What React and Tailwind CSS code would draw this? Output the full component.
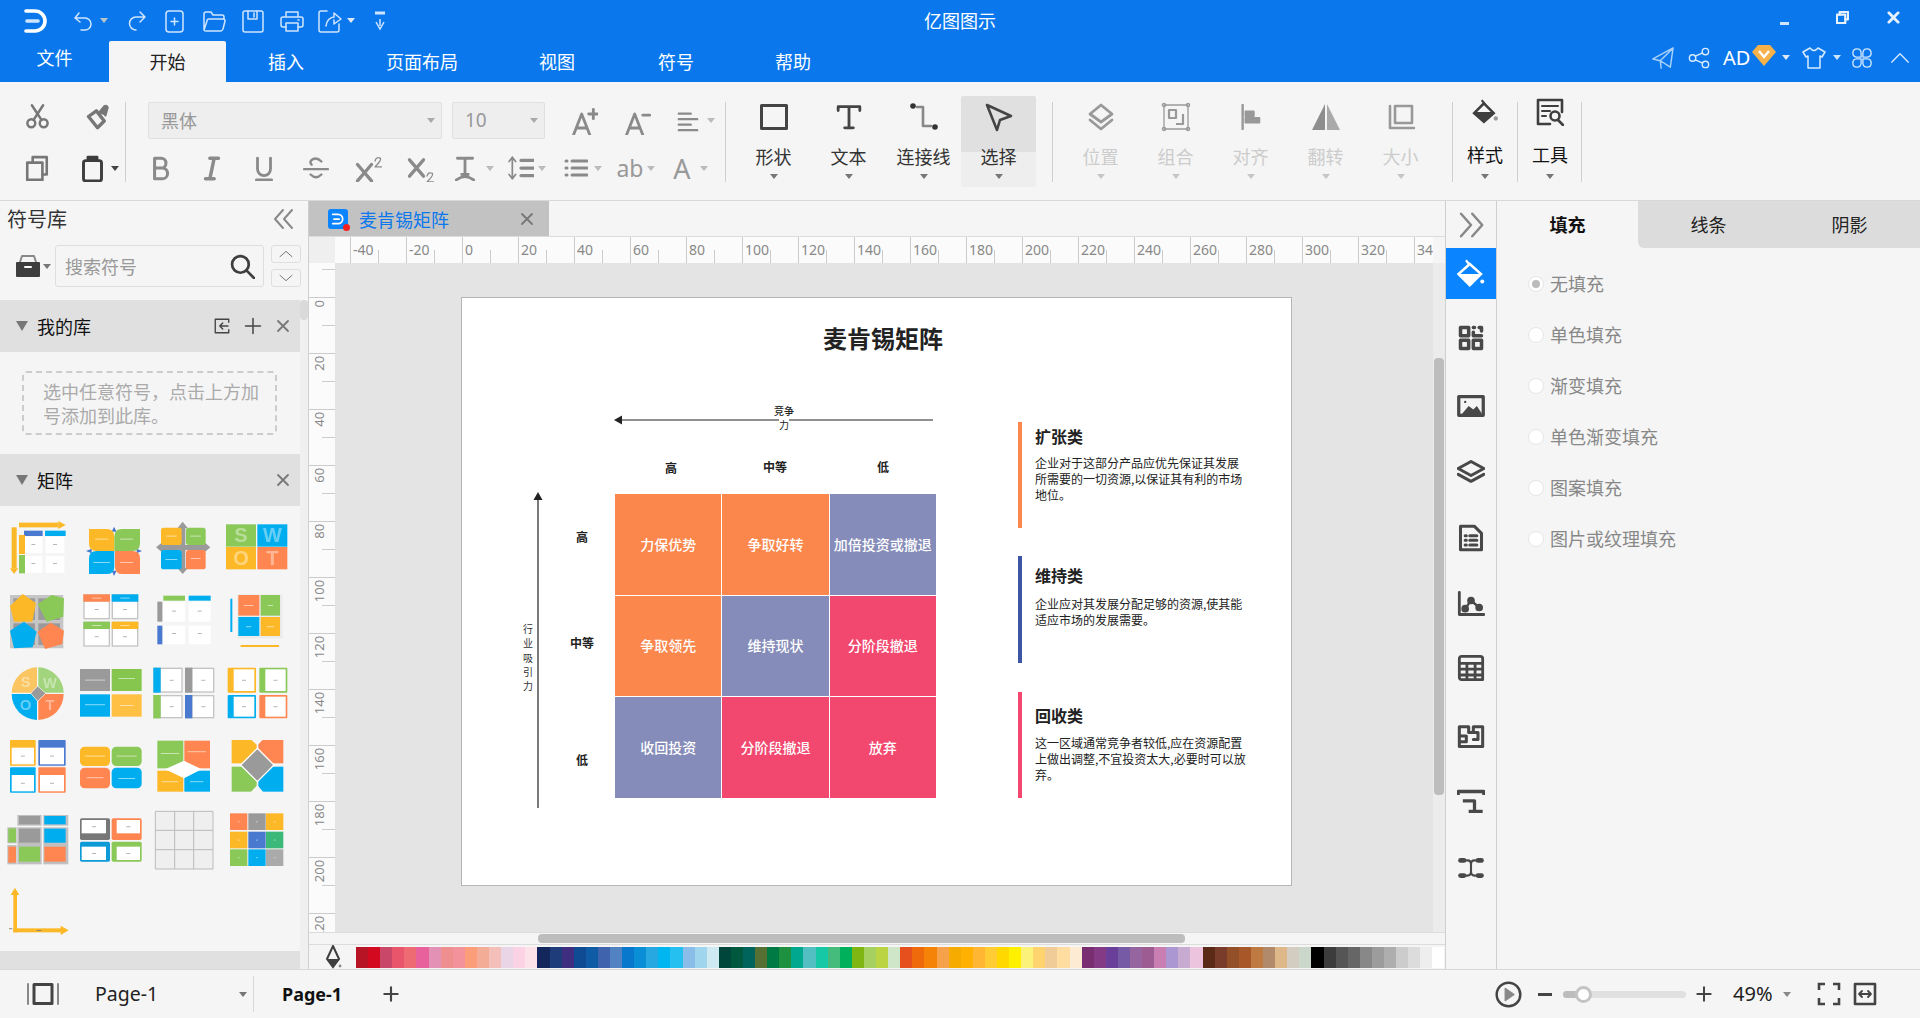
import React from "react";

const Y = "#fdb827", C = "#00aeef", G = "#8ac858", O = "#ff8650", K = "#9a9a9a", B = "#4a7ad0", W = "#ffffff";

const R = (x, y, x2, y2, f, rx = 0) => <rect x={x} y={y} width={x2 - x} height={y2 - y} fill={f} rx={rx} />;
const L = (cx, cy, w = 12, f = "#a8a8a8") => <rect x={cx - w / 2} y={cy - 1} width={w} height={2.5} fill={f} fillOpacity={f === "#fff" ? 0.65 : 1} />;

function Card({ x, y, x2, y2, c, inset = [5, 5, 5, 5] }) {
  return (
    <>
      {R(x, y, x2, y2, c, 3)}
      {R(x + inset[0], y + inset[1], x2 - inset[2], y2 - inset[3], W)}
      {L((x + inset[0] + x2 - inset[2]) / 2, (y + inset[1] + y2 - inset[3]) / 2)}
    </>
  );
}

function T({ c, r, children }) {
  const y0 = r < 3 ? 36 + 219 * r : 3 + 219 * (r - 3);
  return (
    <svg viewBox={`${3 + 219 * c} ${y0} 219 219`} width="73" height="73" className="blur-[0.7px]">
      {children}
    </svg>
  );
}

const SL = ({ x, y, t, s = 44 }) => (
  <text x={x} y={y} fontSize={s} fontFamily="Liberation Sans" fontWeight="700" fill="#fff" fillOpacity="0.4" textAnchor="middle">{t}</text>
);

const Thumbs = [
  <T c={0} r={0} key="1">
    {R(57, 68, 175, 82, Y)}<polygon points="175,63 197,75 175,87" fill={Y} />
    {R(35, 82, 50, 205, Y)}<polygon points="30,205 55,205 42,222" fill={Y} />
    {R(72, 92, 128, 108, B)}{R(135, 92, 197, 108, C)}
    {R(57, 105, 75, 162, Y)}{R(57, 165, 75, 220, G)}
    {R(75, 110, 127, 160, W)}{R(137, 110, 193, 160, W)}{R(75, 168, 127, 218, W)}{R(137, 168, 193, 218, W)}
    {L(100, 133)}{L(165, 133)}{L(100, 190)}{L(165, 190)}
  </T>,
  <T c={1} r={0} key="2">
    <polygon points="342,80 335,95 350,95" fill={B} /><polygon points="258,153 275,146 275,160" fill={B} />
    <polygon points="426,153 410,146 410,160" fill={B} /><polygon points="342,228 335,212 350,212" fill={B} />
    <path d="M267 87H320Q343 87 343 110V153H290Q267 153 267 130Z" fill={Y} />
    <path d="M343 110Q343 87 366 87H420V130Q420 153 397 153H343Z" fill={G} />
    <path d="M267 175Q267 153 290 153H343V200Q343 222 320 222H267Z" fill={C} />
    <path d="M345 153H397Q420 153 420 175V222H368Q345 222 345 200Z" fill={O} />
    {L(305, 117, 40, "#fff")}{L(380, 117, 40, "#fff")}{L(305, 187, 50, "#fff")}{L(380, 187, 40, "#fff")}
  </T>,
  <T c={2} r={0} key="3">
    {R(541, 80, 556, 210, K)}{R(485, 135, 615, 150, K)}
    <polygon points="548,65 532,85 564,85" fill={K} /><polygon points="548,222 532,204 564,204" fill={K} />
    <polygon points="468,142 488,126 488,158" fill={K} /><polygon points="631,142 612,126 612,158" fill={K} />
    {R(483, 83, 545, 135, Y, 8)}{R(558, 83, 617, 135, G, 8)}{R(483, 150, 545, 208, C, 8)}{R(558, 150, 617, 208, O, 8)}
    {L(514, 108, 32, "#fff")}{L(587, 108, 32, "#fff")}{L(514, 178, 36, "#fff")}{L(587, 175, 30, "#fff")}
  </T>,
  <T c={3} r={0} key="4">
    {R(678, 73, 768, 140, G)}{R(772, 73, 862, 140, C)}{R(678, 141, 768, 208, Y)}{R(772, 141, 862, 208, O)}
    <SL x={723} y={127} t="S" s={60} /><SL x={817} y={127} t="W" s={60} /><SL x={723} y={195} t="O" s={60} /><SL x={817} y={195} t="T" s={60} />
  </T>,
  <T c={0} r={1} key="5">
    {R(30, 285, 190, 445, "#c5c5c5", 2)}{R(40, 295, 105, 360, K)}{R(115, 295, 180, 360, K)}{R(40, 370, 105, 435, K)}{R(115, 370, 180, 435, K)}
    <polygon points="68,282 108,310 97,365 42,365 30,318" fill={Y} />
    <polygon points="113,312 155,285 192,295 190,350 140,365" fill={G} />
    <polygon points="30,392 72,365 110,395 98,442 42,445" fill={C} />
    <polygon points="113,395 152,368 192,392 187,432 135,447" fill={O} />
  </T>,
  <T c={1} r={1} key="6">
    {[[250, 283, O], [335, 283, C], [250, 365, G], [335, 365, Y]].map(([x, y, c]) => (
      <g key={x + "" + y}>
        {R(x, y, x + 80, y + 75, "#c4c4c4")}{R(x + 4, y + 22, x + 76, y + 71, W)}{R(x, y, x + 80, y + 22, c)}
        {L(x + 40, y + 11, 28, "#fff")}{L(x + 40, y + 45)}
      </g>
    ))}
  </T>,
  <T c={2} r={1} key="7">
    {R(490, 287, 555, 302, G)}{R(566, 287, 632, 302, C)}{R(472, 305, 487, 365, K)}{R(472, 377, 487, 433, B)}
    {R(490, 305, 555, 365, W)}{R(566, 305, 632, 365, W)}{R(490, 377, 555, 433, W)}{R(566, 377, 632, 433, W)}
    {L(522, 333)}{L(599, 333)}{L(522, 400)}{L(599, 400)}
  </T>,
  <T c={3} r={1} key="8">
    {R(712, 283, 847, 415, "#ebebeb")}{R(715, 285, 778, 347, O)}{R(782, 285, 840, 347, G)}{R(715, 351, 778, 408, C)}{R(782, 351, 840, 408, Y)}
    {R(691, 296, 697, 396, C)}{R(722, 435, 837, 441, Y)}
    {L(746, 316, 30, "#fff")}{L(811, 316, 16, "#fff")}{L(746, 380, 16, "#fff")}{L(811, 380, 22, "#fff")}
  </T>,
  <T c={0} r={2} key="9">
    <path d="M111 578V502A78 78 0 0 0 35 578Z" fill="#fbc662" /><path d="M115 578V502A78 78 0 0 1 191 578Z" fill="#a1d47c" />
    <path d="M111 582H35A78 78 0 0 0 111 660Z" fill={C} /><path d="M115 582H191A78 78 0 0 1 115 660Z" fill={O} />
    <polygon points="113,558 137,580 113,604 92,580" fill={K} stroke="#fff" strokeWidth="2" />
    <SL x={77} y={560} t="S" /><SL x={150} y={565} t="W" /><SL x={77} y={630} t="O" /><SL x={150} y={630} t="T" />
  </T>,
  <T c={1} r={2} key="10">
    {R(240, 507, 330, 573, K)}{R(335, 507, 425, 573, "#86c64f")}{R(240, 583, 330, 650, C)}{R(335, 583, 425, 650, "#ffc043")}
    {L(285, 540, 60, "#fff")}{L(380, 535, 50, "#fff")}{L(285, 614, 60, "#fff")}{L(380, 616, 40, "#fff")}
  </T>,
  <T c={2} r={2} key="11">
    {[[460, 503, 548, 578, C], [555, 503, 643, 578, K], [460, 585, 548, 655, G], [555, 585, 643, 655, B]].map(([x, y, x2, y2, c]) => (
      <g key={x + "" + y}>
        {R(x, y, x2, y2, "#c4c4c4")}{R(x + 22, y + 4, x2 - 4, y2 - 4, W)}{R(x, y, x + 22, y2, c)}{L(x + 55, (y + y2) / 2)}
      </g>
    ))}
  </T>,
  <T c={3} r={2} key="12">
    <Card x={683} y={503} x2={768} y2={578} c={Y} inset={[18, 5, 5, 5]} />
    <Card x={778} y={503} x2={862} y2={578} c={G} inset={[18, 5, 5, 5]} />
    <Card x={683} y={585} x2={768} y2={655} c={C} inset={[18, 5, 5, 5]} />
    <Card x={778} y={585} x2={862} y2={655} c={O} inset={[18, 5, 5, 5]} />
  </T>,
  <T c={0} r={3} key="13">
    <Card x={30} y={30} x2={107} y2={107} c={Y} inset={[5, 23, 5, 4]} />
    <Card x={115} y={30} x2={197} y2={107} c={B} inset={[5, 23, 5, 4]} />
    <Card x={30} y={112} x2={107} y2={188} c={C} inset={[5, 23, 5, 4]} />
    <Card x={115} y={112} x2={197} y2={188} c={O} inset={[5, 23, 5, 4]} />
  </T>,
  <T c={1} r={3} key="14">
    {R(240, 50, 330, 108, Y, 14)}{R(335, 50, 425, 108, G, 14)}{R(240, 113, 330, 175, O, 14)}{R(335, 113, 425, 175, C, 14)}
    {L(285, 78, 60, "#fff")}{L(380, 78, 60, "#fff")}{L(285, 143, 50, "#fff")}{L(380, 145, 50, "#fff")}
  </T>,
  <T c={2} r={3} key="15">
    {R(472, 32, 550, 115, G)}{R(553, 32, 630, 115, O)}{R(472, 122, 550, 185, Y)}{R(553, 122, 630, 185, C)}
    <polygon points="495,118 552,92 605,118 552,145" fill={W} />
    {L(510, 70, 55, "#fff")}{L(590, 65, 55, "#fff")}{L(510, 155, 50, "#fff")}{L(590, 155, 40, "#fff")}
  </T>,
  <T c={3} r={3} key="16">
    {R(695, 30, 770, 100, Y)}{R(775, 30, 850, 100, O)}{R(695, 110, 770, 185, G)}{R(775, 110, 850, 185, C)}
    <polygon points="772,55 822,105 772,155 722,105" fill={K} stroke="#fff" strokeWidth="4" />
    <polygon points="752,28 790,28 772,46" fill="#f5f5f5" /><polygon points="752,187 790,187 772,165" fill="#f5f5f5" />
  </T>,
  <T c={0} r={4} key="17">
    {R(52, 255, 125, 287, "#c0c0c0")}{R(57, 258, 120, 283, K)}{R(130, 255, 205, 287, "#c0c0c0")}{R(133, 258, 197, 283, C)}
    {R(22, 292, 50, 340, "#c0c0c0")}{R(25, 295, 48, 337, G)}{R(22, 345, 50, 403, "#c0c0c0")}{R(25, 350, 48, 398, O)}
    {R(52, 292, 125, 345, "#c0c0c0")}{R(57, 296, 120, 338, K)}{R(130, 292, 205, 345, "#c0c0c0")}{R(133, 296, 197, 338, C)}
    {R(52, 345, 125, 403, "#c0c0c0")}{R(57, 350, 120, 395, G)}{R(130, 345, 205, 403, "#c0c0c0")}{R(133, 350, 197, 395, O)}
  </T>,
  <T c={1} r={4} key="18">
    {R(240, 265, 330, 330, "#777", 5)}{R(245, 270, 318, 310, W)}{L(282, 290)}
    {R(335, 265, 425, 330, O, 5)}{R(350, 270, 420, 310, W)}{L(385, 290)}
    {R(240, 335, 330, 395, "#0d9bd7", 5)}{R(245, 350, 318, 390, W)}{L(282, 370)}
    {R(335, 335, 425, 395, G, 5)}{R(350, 350, 420, 390, W)}{L(385, 370)}
  </T>,
  <T c={2} r={4} key="19">
    {R(466, 244, 639, 417, "#efefef")}
    <path d="M466 244H639V417H466ZM524 244V417M581 244V417M466 301H639M466 359H639" fill="none" stroke="#bbb" strokeWidth="3" />
  </T>,
  <T c={3} r={4} key="20">
    {[[690, 250, O], [745, 250, K], [798, 250, Y], [690, 305, Y], [745, 305, B], [798, 305, "#3cb878"], [690, 358, G], [745, 358, C], [798, 358, "#aaaaaa"]].map(([x, y, c]) => (
      <g key={x + "" + y}>{R(x, y, x + 52, y + 50, c)}{L(x + 26, y + 25, 5, "#fff")}</g>
    ))}
  </T>,
  <T c={0} r={5} key="21">
    {R(40, 490, 51, 607, Y)}{R(40, 595, 185, 607, Y)}
    <polygon points="45,473 32,495 58,495" fill={Y} /><polygon points="206,601 182,587 182,615" fill={Y} />
    {L(32, 596, 10, "#777")}{L(117, 601, 14, "#777")}
  </T>,
];

const Caret = ({ cls = "border-t-[#777]", className = "" }) => (
  <div className={`w-0 h-0 border-x-[4px] border-x-transparent border-t-[5px] ${cls} ${className}`} />
);

const Sv = ({ s = 24, h, c = "#444", w = 2, vb = "0 0 24 24", className = "", children }) => (
  <svg width={s} height={h || s} viewBox={vb} fill="none" stroke={c} strokeWidth={w} strokeLinecap="round" strokeLinejoin="round" className={`shrink-0 ${className}`}>
    {children}
  </svg>
);

const Q = "#cfe5ff";

function QuickBar() {
  return (
    <div className="flex items-center flex-1">
      <svg width="24" height="26" viewBox="0 0 24 26" className="ml-[24px] shrink-0">
        <path d="M2 3H11A10 10 0 0 1 11 23H2" fill="none" stroke="#fff" strokeWidth="3.6" strokeLinecap="round" />
        <path d="M3 13H14" stroke="#cfe5ff" strokeWidth="3.6" strokeLinecap="round" />
      </svg>
      <Sv c={Q} w={1.5} className="ml-[23px]"><path d="M8 4L4 9L9 13M4 9H14A6 6 0 0 1 14 21H10" /></Sv>
      <Caret cls="border-t-[#b9c4cc]" className="ml-[5px]" />
      <Sv c={Q} w={1.5} className="ml-[17px]"><path d="M15 3L20 8L15 13M20 8H11A6.5 6.5 0 0 0 11 21" /></Sv>
      <Sv c={Q} w={1.5} className="ml-[13px]"><rect x="4" y="2" width="17" height="21" rx="3" /><path d="M12.5 9V16M9 12.5H16" /></Sv>
      <Sv c={Q} w={1.5} className="ml-[16px]"><path d="M2 21V5Q2 3 4 3H9L11 6H20Q22 6 22 8V10M2 21Q2 22 4 22H19Q20 22 21 20L23 12Q23 10 21 10H7Q5 10 5 12L2 21" /></Sv>
      <Sv c={Q} w={1.5} className="ml-[15px]"><rect x="2" y="2" width="20" height="21" rx="2" /><path d="M7 2V10H16V2M13 4V8" /></Sv>
      <Sv c={Q} w={1.5} className="ml-[15px]"><path d="M6 8V3H18V8M6 18H3Q1 18 1 16V10Q1 8 3 8H21Q23 8 23 10V16Q23 18 21 18H18" /><rect x="6" y="14" width="12" height="8" /><path d="M18 11H19" /></Sv>
      <Sv c={Q} w={1.5} className="ml-[14px]"><path d="M9 2H3Q1 2 1 4V21Q1 23 3 23H19Q21 23 21 21V15M8 17Q9 9 16 8V4L23 10L16 15V11" /></Sv>
      <Caret cls="border-t-[#dfe9f5]" className="ml-[5px]" />
      <svg width="14" height="22" viewBox="0 0 14 22" className="ml-[18px] shrink-0" fill="none" stroke={Q} strokeWidth="1.5">
        <path d="M2 3H12" strokeWidth="3" /><path d="M3 12L7 19L11 12" /><path d="M7 9V16" />
      </svg>
    </div>
  );
}

function WindowBtns() {
  return (
    <div className="flex-1 flex items-center justify-end">
      <div className="w-[9px] h-[2.5px] bg-[#cfe5ff] mt-[6px]" />
      <Sv s={13} c="#e7f2ff" w={2.4} vb="0 0 14 14" className="ml-[47px] -mt-[6px]"><path d="M4 4V1H13V9H10" /><rect x="1" y="4" width="9" height="9" /></Sv>
      <Sv s={13} c="#e7f2ff" w={3} vb="0 0 14 14" className="ml-[38px] mr-[20px] -mt-[6px]"><path d="M2 2L12 12M12 2L2 12" /></Sv>
    </div>
  );
}

const tabs = [["文件", 109], ["开始", 117, true], ["插入", 120], ["页面布局", 152], ["视图", 118], ["符号", 120], ["帮助", 114]];

function TabRow() {
  return (
    <div className="flex h-[41px] items-stretch">
      {tabs.map(([t, w, active], i) => (
        <div
          key={t}
          className={`flex items-center justify-center text-[18px] ${active ? "bg-[#f5f5f5] text-[#222] rounded-t-[2px]" : "text-white"} ${i === 0 ? "pb-[9px]" : ""}`}
          style={{ width: w }}
        >
          {t}
        </div>
      ))}
      <div className="ml-auto flex items-center pb-[8px] pr-[10px]">
        <Sv s={22} c="#a9d0fb" w={1.6} vb="0 0 24 24"><path d="M23 1L1 13L9 15L10 23M23 1L20 22L9 15M23 1L9 15" /></Sv>
        <Sv s={22} c="#d9ebff" w={1.5} className="ml-[14px]"><circle cx="5" cy="12" r="3.5" /><circle cx="19" cy="5" r="3.5" /><circle cx="19" cy="19" r="3.5" /><path d="M8 10L16 6.5M8 14L16 17.5" /></Sv>
        <span className="ml-[13px] w-[26px] text-[20px] leading-[24px] text-white font-['Noto_Sans',sans-serif]">AD</span>
        <svg width="24" height="22" viewBox="0 0 24 22" className="ml-[3px] -mt-[4px] shrink-0">
          <polygon points="6,0 18,0 24,7 12,21 0,7" fill="#f6b14a" />
          <path d="M7 6L12 12L17 6" fill="none" stroke="#fff" strokeWidth="2.4" />
        </svg>
        <Caret cls="border-t-[#dfe9f5]" className="ml-[6px]" />
        <Sv s={24} c="#d9ebff" w={1.5} className="ml-[12px]"><path d="M8 2L1 6L4 11L6 10V22H18V10L20 11L23 6L16 2Q12 7 8 2Z" /></Sv>
        <Caret cls="border-t-[#cfe5ff]" className="ml-[7px]" />
        <Sv s={22} c="#cfe5ff" w={1.5} className="ml-[10px]"><path d="M11 11H6A4.5 4.5 0 1 1 11 6ZM13 11H18A4.5 4.5 0 1 0 13 6ZM11 13H6A4.5 4.5 0 1 0 11 18ZM13 13H18A4.5 4.5 0 1 1 13 18Z" /></Sv>
        <Sv s={20} c="#d9ebff" w={1.6} className="ml-[17px]"><path d="M2 17L12 7L22 17" /></Sv>
      </div>
    </div>
  );
}

const Dv = ({ className = "" }) => <div className={`w-px h-[80px] mt-[20px] bg-[#cfcfcf] shrink-0 ${className}`} />;

const SmallIcon = ({ w = 52, children, className = "" }) => (
  <div className={`flex items-center justify-center h-full shrink-0 ${className}`} style={{ width: w }}>{children}</div>
);

const g1 = "#8a8a8a";

function Clipboard() {
  return (
    <div className="w-[125px] h-full pt-[8px] shrink-0">
      <div className="flex h-[52px] items-center">
        <SmallIcon w={28} className="ml-[23px]">
          <Sv s={27} c="#777" w={2.2}><circle cx="6.5" cy="18" r="3.5" /><circle cx="17.5" cy="18" r="3.5" /><path d="M8.5 15L17 2M15.5 15L7 2" /></Sv>
        </SmallIcon>
        <SmallIcon w={28} className="ml-[32px]">
          <Sv s={27} c="#777" w={2}><path d="M11 7L4 12L12 22L18 16Z" fill="none" strokeWidth="3" /><path d="M13 9L18 3Q20 2 21 4L19 11" fill="#777" /></Sv>
        </SmallIcon>
      </div>
      <div className="flex h-[52px] items-center">
        <SmallIcon w={28} className="ml-[23px]">
          <Sv s={26} c="#777" w={2.4}><rect x="3" y="7" width="14" height="16" /><path d="M8 7V2H21V18H17" /></Sv>
        </SmallIcon>
        <SmallIcon w={28} className="ml-[27px]">
          <Sv s={27} c="#3d3d3d" w={2.6}><rect x="4" y="5" width="16" height="18" rx="2" /><path d="M8 5V2H16V5Z" fill="#3d3d3d" /></Sv>
        </SmallIcon>
        <Caret cls="border-t-[#444]" className="ml-[5px]" />
      </div>
    </div>
  );
}

function FontGroup() {
  return (
    <div className="w-[599px] h-full pt-[8px] shrink-0">
      <div className="flex h-[52px] items-center pt-[9px]">
        <div className="ml-[22px] w-[294px] h-[37px] bg-[#eeeeee] border border-[#e0e0e0] rounded-[2px] flex items-center px-[12px] text-[18px] text-[#999] justify-between">
          黑体<Caret cls="border-t-[#aaa]" className="mr-[-6px]" />
        </div>
        <div className="ml-[10px] w-[93px] h-[37px] bg-[#eeeeee] border border-[#e0e0e0] rounded-[2px] flex items-center px-[12px] text-[19px] text-[#999] justify-between font-['Noto_Sans',sans-serif]">
          10<Caret cls="border-t-[#aaa]" className="mr-[-6px]" />
        </div>
        <SmallIcon w={32} className="ml-[23px]">
          <Sv s={28} c={g1} w={2.4}><path d="M3 24L10 6L17 24M5.5 18H14.5" /><path d="M20 2V10M16 6H24" /></Sv>
        </SmallIcon>
        <SmallIcon w={32} className="ml-[21px]">
          <Sv s={28} c={g1} w={2.4}><path d="M3 24L10 6L17 24M5.5 18H14.5" /><path d="M17 7H23" /></Sv>
        </SmallIcon>
        <SmallIcon w={24} className="ml-[23px]">
          <Sv s={22} c={g1} w={2.6}><path d="M2 4H15M2 10H22M2 16H15M2 22H22" /></Sv>
        </SmallIcon>
        <Caret cls="border-t-[#bbb]" className="ml-[7px]" />
      </div>
      <div className="flex h-[52px] items-center">
        <SmallIcon className="ml-[8px]"><Sv s={26} c={g1} w={2.8}><path d="M7 3V22H14A5 5 0 0 0 14 12H7M7 3H13A4.5 4.5 0 0 1 13 12" /></Sv></SmallIcon>
        <SmallIcon><Sv s={26} c={g1} w={3.2}><path d="M10 3H18M6 22H14M14 3L10 22" /></Sv></SmallIcon>
        <SmallIcon><Sv s={26} c={g1} w={2.6}><path d="M6 3V13A6 6 0 0 0 18 13V3M5 23H19" /></Sv></SmallIcon>
        <SmallIcon><Sv s={26} c={g1} w={2.2}><path d="M17 6Q12 1 7.5 5Q6 7 8 9M1 13H23M7 18Q12 23 17 18" /></Sv></SmallIcon>
        <SmallIcon>
          <Sv s={28} c={g1} w={2.8}><path d="M3 9L15 23M15 9L3 23" /><path d="M18 6Q19 2 22.5 3.5Q24 5 18 11H24" strokeWidth="1.1" /></Sv>
        </SmallIcon>
        <SmallIcon>
          <Sv s={28} c={g1} w={2.8}><path d="M3 5L15 19M15 5L3 19" /><path d="M18 19Q19 15 22.5 16.5Q24 18 18 24H24" strokeWidth="1.1" /></Sv>
        </SmallIcon>
        <SmallIcon w={28} className="ml-[5px]"><Sv s={26} c={g1} w={3}><path d="M5 3H19M12 3V18M9 18H15M4 23Q12 17 20 23" strokeWidth="2.6" /></Sv></SmallIcon>
        <Caret cls="border-t-[#bbb]" className="ml-[7px]" />
        <SmallIcon w={28} className="ml-[13px]"><Sv s={26} c={g1} w={2.6}><path d="M4 2V22M1 6L4 2L7 6M1 18L4 22L7 18" strokeWidth="1.6" /><path d="M12 5H24M12 12H24M12 19H24" strokeWidth="3" /></Sv></SmallIcon>
        <Caret cls="border-t-[#bbb]" className="ml-[3px]" />
        <SmallIcon w={28} className="ml-[16px]"><Sv s={24} c={g1} w={3}><path d="M8 5H23M8 12H23M8 19H23M2 5H3M2 12H3M2 19H3" /></Sv></SmallIcon>
        <Caret cls="border-t-[#bbb]" className="ml-[4px]" />
        <SmallIcon w={28} className="ml-[14px]"><span className="text-[23px] text-[#999] leading-none font-['Noto_Sans',sans-serif]">ab</span></SmallIcon>
        <Caret cls="border-t-[#bbb]" className="ml-[3px]" />
        <SmallIcon w={28} className="ml-[13px]"><span className="text-[27px] text-[#999] leading-none font-['Noto_Sans',sans-serif]">A</span></SmallIcon>
        <Caret cls="border-t-[#bbb]" className="ml-[4px]" />
      </div>
    </div>
  );
}

function BigBtn({ label, children, disabled, active, tight, w = 75, className = "" }) {
  return (
    <div
      className={`mt-[14px] h-[91px] flex flex-col items-center shrink-0 rounded-[2px] ${active ? "bg-[linear-gradient(#e0e0e0_56px,#eeeeee_56px)]" : ""} ${className}`}
      style={{ width: w }}
    >
      <div className={`flex items-center justify-center ${tight ? "h-[32px]" : "h-[42px]"}`}>{children}</div>
      <div className={`h-[24px] leading-[24px] text-[18px] ${disabled ? "text-[#cccccc] mt-[6px]" : tight ? "text-[#111] mt-[14px]" : "text-[#333] mt-[6px]"}`}>{label}</div>
      <Caret cls={disabled ? "border-t-[#c6c6c6]" : "border-t-[#777]"} className={tight ? "mt-[8px]" : "mt-[6px]"} />
    </div>
  );
}

const gd = "#999";

function Ribbon() {
  return (
    <div className="flex h-[119px] border-b border-[#d8d8d8] bg-[#f5f5f5] shrink-0">
      <Clipboard />
      <Dv />
      <FontGroup />
      <Dv />
      <div className="w-[10px] shrink-0" />
      <BigBtn label="形状"><Sv s={28} h={26} c="#444" w={3} vb="0 0 28 26"><rect x="1.5" y="1.5" width="25" height="23" /></Sv></BigBtn>
      <BigBtn label="文本"><Sv s={26} c="#444" w={2.6}><path d="M2 6V2.5H22V6M12 2.5V22M8 22H16" /></Sv></BigBtn>
      <BigBtn label="连接线"><Sv s={30} h={28} c="#888" w={2.6} vb="0 0 30 28"><path d="M8 4H14V23H22" /><circle cx="4" cy="3" r="2.8" fill="#333" stroke="none" /><circle cx="26" cy="24" r="2.8" fill="#333" stroke="none" /></Sv></BigBtn>
      <BigBtn label="选择" active><Sv s={30} c="#444" w={2.6} vb="0 0 30 30"><path d="M3 3L27 14L16 18L13 28Z" /></Sv></BigBtn>
      <Dv className="ml-[16px]" />
      <div className="w-[10px] shrink-0" />
      <BigBtn label="位置" disabled><Sv s={28} c={gd} w={2.8} vb="0 0 28 28"><path d="M14 2L25 11L14 19L3 11Z" /><path d="M3 17L14 26L25 17" /></Sv></BigBtn>
      <BigBtn label="组合" disabled><Sv s={30} c={gd} w={1.3} vb="0 0 30 30"><rect x="3" y="3" width="24" height="24" /><circle cx="3" cy="3" r="1.6" /><circle cx="27" cy="3" r="1.6" /><circle cx="3" cy="27" r="1.6" /><circle cx="27" cy="27" r="1.6" /><path d="M8 8H15V16H8ZM22 12V22H15" strokeWidth="2.2" strokeLinecap="butt" /></Sv></BigBtn>
      <BigBtn label="对齐" disabled><Sv s={26} c={gd} w={2} vb="0 0 26 28"><path d="M4 1V27" strokeWidth="2.6" /><rect x="7" y="8" width="9" height="5" fill={gd} /><rect x="7" y="15" width="15" height="5" fill={gd} /></Sv></BigBtn>
      <BigBtn label="翻转" disabled><svg width="30" height="26" viewBox="0 0 30 26" className="shrink-0"><polygon points="14,0 14,26 1,26" fill="#8e8e8e" /><polygon points="16,0 16,26 29,26" fill="#aaaaaa" /></svg></BigBtn>
      <BigBtn label="大小" disabled><Sv s={28} c={gd} w={3} vb="0 0 28 28"><rect x="8" y="3" width="17" height="17" strokeWidth="2.6" /><path d="M3 3V25H27" strokeWidth="2.6" /></Sv></BigBtn>
      <Dv className="ml-[14px]" />
      <BigBtn label="样式" tight w={64}>
        <svg width="30" height="26" viewBox="0 0 24 24" className="shrink-0"><path d="M9 1L12 5" stroke="#3e3e3e" strokeWidth="2" /><path d="M11 4L20 13L11 21L2 13Z" fill="none" stroke="#3e3e3e" strokeWidth="2.4" /><path d="M2 12H20L11 21Z" fill="#3e3e3e" /><circle cx="22" cy="18" r="2" fill="#999" /></svg>
      </BigBtn>
      <Dv />
      <BigBtn label="工具" tight w={62} className="ml-px">
        <Sv s={28} c="#3e3e3e" w={2.6} vb="0 0 28 28"><path d="M26 14V2H2V26H14" /><path d="M6 8H22M6 13H14M6 18H10" strokeWidth="2" /><circle cx="19" cy="18" r="4.5" /><path d="M22 22L27 27" /></Sv>
      </BigBtn>
      <Dv />
    </div>
  );
}

const Chevs = ({ dir = "left", c = "#888", s = 28 }) => (
  <Sv s={s} c={c} w={2} vb="0 0 24 24">
    {dir === "left" ? <path d="M11 3L3 12L11 21M20 3L12 12L20 21" /> : <path d="M4 3L12 12L4 21M13 3L21 12L13 21" />}
  </Sv>
);

const Tri = () => <div className="w-0 h-0 border-x-[6px] border-x-transparent border-t-[10px] border-t-[#777]" />;

const XIcon = () => <Sv s={14} c="#777" w={1.8} vb="0 0 14 14"><path d="M2 2L12 12M12 2L2 12" /></Sv>;

function LeftPanel() {
  return (
    <div className="w-[309px] border-r border-[#cfcfcf] flex flex-col shrink-0 bg-[#f5f5f5]">
      <div className="h-[36px] flex items-center justify-between pl-[7px] pr-[12px] shrink-0">
        <span className="text-[20px] text-[#333]">符号库</span>
        <Chevs s={24} />
      </div>
      <div className="flex h-[42px] mt-[8px] items-center shrink-0">
        <Sv s={24} c="#3e3e3e" w={2} className="ml-[16px]"><path d="M4 8L6 2H18L20 8" strokeWidth="2" stroke="#888" /><path d="M1 9H23V22H1Z" fill="#3e3e3e" /><path d="M9 13H15" stroke="#fff" /></Sv>
        <Caret cls="border-t-[#777]" className="ml-[3px]" />
        <div className="ml-[4px] w-[209px] h-[42px] border border-[#dedede] rounded-[3px] flex items-center justify-between pl-[9px] pr-[8px]">
          <span className="text-[18px] text-[#999]">搜索符号</span>
          <Sv s={25} c="#3e3e3e" w={2.6}><circle cx="10" cy="10" r="8" /><path d="M16 16L23 23" /></Sv>
        </div>
        <div className="ml-[7px] flex flex-col gap-[6px]">
          <div className="w-[30px] h-[18px] border border-[#dedede] rounded-[3px] flex items-center justify-center"><Sv s={16} c="#777" w={1.5}><path d="M3 16L12 8L21 16" /></Sv></div>
          <div className="w-[30px] h-[18px] border border-[#dedede] rounded-[3px] flex items-center justify-center"><Sv s={16} c="#777" w={1.5}><path d="M3 8L12 16L21 8" /></Sv></div>
        </div>
      </div>
      <div className="mt-[13px] flex flex-1 min-h-0">
        <div className="w-[300px] flex flex-col shrink-0">
          <div className="h-[52px] bg-[#e0e0e0] flex items-center shrink-0">
            <div className="ml-[16px]"><Tri /></div>
            <span className="ml-[9px] text-[18px] text-[#111]">我的库</span>
            <Sv s={18} c="#444" w={1.8} className="ml-[122px]"><path d="M21 7V3H3V21H21V17M20 12H9M13 8L9 12L13 16" /></Sv>
            <Sv s={18} c="#444" w={2} className="ml-[13px]"><path d="M12 2V22M2 12H22" /></Sv>
            <div className="ml-[14px]"><XIcon /></div>
          </div>
          <div className="h-[102px] pt-[19px] pl-[22px] shrink-0">
            <div className="w-[255px] h-[64px] border-2 border-dashed border-[#cccccc] rounded-[4px] pl-[19px] pt-[6px] text-[18px] leading-[24px] text-[#aaaaaa]">
              <div className="whitespace-nowrap">选中任意符号，点击上方加</div>
              <div className="whitespace-nowrap">号添加到此库。</div>
            </div>
          </div>
          <div className="h-[52px] bg-[#e0e0e0] flex items-center shrink-0">
            <div className="ml-[16px]"><Tri /></div>
            <span className="ml-[9px] text-[18px] text-[#111]">矩阵</span>
            <div className="ml-auto mr-[10px]"><XIcon /></div>
          </div>
          <div className="flex-1 min-h-0 pl-px pt-[6px] grid grid-cols-[repeat(4,73px)] auto-rows-[73px] content-start overflow-hidden">
            {Thumbs}
          </div>
          <div className="h-[18px] bg-[#e0e0e0] shrink-0" />
        </div>
        <div className="w-[8px] bg-[#f0f0f0]">
          <div className="h-[20px] bg-[#dadada] rounded-[4px]" />
        </div>
      </div>
    </div>
  );
}

const hTicks = Array.from({ length: 20 }, (_, i) => ({ x: 15 + 56 * i, v: -40 + 20 * i }));
const vTicks = Array.from({ length: 12 }, (_, i) => ({ y: 34 + 56 * i, v: 20 * i }));

function HRuler() {
  return (
    <svg width="1098" height="26" className="block shrink-0 bg-[#fbfbfb]">
      {hTicks.map((t) => t.x).map((x) => (
        <g key={x} stroke="#cccccc">
          <line x1={x + 0.5} y1="0" x2={x + 0.5} y2="26" />
          <line x1={x + 28.5} y1="13" x2={x + 28.5} y2="26" />
        </g>
      ))}
      {hTicks.map((t) => (
        <text key={t.x} x={t.x + 3} y="18" fontSize="14" fill="#888" fontFamily="Noto Sans">{t.v}</text>
      ))}
    </svg>
  );
}

function VRuler() {
  return (
    <svg width="26" height="669" className="block shrink-0 bg-[#fbfbfb]">
      {vTicks.map((t) => (
        <g key={t.y} stroke="#cccccc">
          <line x1="0" y1={t.y + 0.5} x2="26" y2={t.y + 0.5} />
          <line x1="13" y1={t.y + 28.5} x2="26" y2={t.y + 28.5} />
          <line x1="13" y1={t.y - 27.5} x2="26" y2={t.y - 27.5} />
        </g>
      ))}
      {vTicks.map((t) => (
        <text key={t.y} transform={`translate(15 ${t.y + 3 + String(t.v).length * 7.4}) rotate(-90)`} fontSize="13" fill="#888" fontFamily="Noto Sans">{t.v}</text>
      ))}
    </svg>
  );
}

const cells = [
  ["力保优势", "bg-[#fb874d]"], ["争取好转", "bg-[#fb874d]"], ["加倍投资或撤退", "bg-[#858cb9]"],
  ["争取领先", "bg-[#fb874d]"], ["维持现状", "bg-[#858cb9]"], ["分阶段撤退", "bg-[#f2476e]"],
  ["收回投资", "bg-[#858cb9]"], ["分阶段撤退", "bg-[#f2476e]"], ["放弃", "bg-[#f2476e]"],
];

const notes = [
  { bar: "bg-[#fb874d]", top: 124, h: 106, title: "扩张类", ty: 127, lines: ["企业对于这部分产品应优先保证其发展", "所需要的一切资源,以保证其有利的市场", "地位。"], ly: 157 },
  { bar: "bg-[#3d55a5]", top: 258, h: 107, title: "维持类", ty: 266, lines: ["企业应对其发展分配足够的资源,使其能", "适应市场的发展需要。"], ly: 298 },
  { bar: "bg-[#f4476f]", top: 394, h: 106, title: "回收类", ty: 406, lines: ["这一区域通常竞争者较低,应在资源配置", "上做出调整,不宜投资太大,必要时可以放", "弃。"], ly: 437 },
];

function PageCanvas() {
  return (
    <div className="relative w-[831px] h-[589px] ml-[126px] mt-[34px] bg-white border border-[#b5b5b5] shrink-0 text-[#222]">
      <div className="absolute left-[361px] top-[25px] w-[120px] text-center text-[24px] leading-[30px] font-bold whitespace-nowrap">麦肯锡矩阵</div>

      <svg width="330" height="14" className="absolute left-[152px] top-[115px]" fill="none">
        <path d="M8 7H319" stroke="#222" strokeWidth="1.2" />
        <polygon points="0,7 8,2.5 8,11.5" fill="#222" />
      </svg>
      <div className="absolute left-[312px] top-[106px] w-[20px] text-center text-[10px] leading-[14px] font-medium whitespace-nowrap">竞争</div>
      <div className="absolute left-[317px] top-[120px] w-[10px] h-[14px] bg-white text-center text-[10px] leading-[14px]">力</div>

      <div className="absolute left-[199px] top-[161px] w-[20px] text-center text-[12px] leading-[18px] font-bold">高</div>
      <div className="absolute left-[298px] top-[160px] w-[30px] text-center text-[12px] leading-[18px] font-bold">中等</div>
      <div className="absolute left-[411px] top-[160px] w-[20px] text-center text-[12px] leading-[18px] font-bold">低</div>

      <svg width="12" height="316" className="absolute left-[70px] top-[194px]" fill="none">
        <path d="M6 8V316" stroke="#222" strokeWidth="1.2" />
        <polygon points="6,0 1.5,8 10.5,8" fill="#222" />
      </svg>

      <div className="absolute left-[110px] top-[230px] w-[20px] text-center text-[12px] leading-[18px] font-bold">高</div>
      <div className="absolute left-[105px] top-[336px] w-[30px] text-center text-[12px] leading-[18px] font-bold">中等</div>
      <div className="absolute left-[110px] top-[453px] w-[20px] text-center text-[12px] leading-[18px] font-bold">低</div>

      <div className="absolute left-[60px] top-[324px] w-[12px] flex flex-col items-center text-[10px] leading-[14.25px] text-[#333]">
        {"行业吸引力".split("").map((c, i) => <span key={i}>{c}</span>)}
      </div>

      <div className="absolute left-[153px] top-[196px] w-[321px] h-[304px] grid grid-cols-3 grid-rows-3 gap-px">
        {cells.map(([t, c], i) => (
          <div key={i} className={`${c} flex items-center justify-center text-white text-[14px] font-medium whitespace-nowrap`}>{t}</div>
        ))}
      </div>

      {notes.map((n) => (
        <React.Fragment key={n.title}>
          <div className={`absolute left-[556px] w-[4px] ${n.bar}`} style={{ top: n.top, height: n.h }} />
          <div className="absolute left-[573px] text-[16px] leading-[22px] font-bold text-[#222] whitespace-nowrap" style={{ top: n.ty }}>{n.title}</div>
          <div className="absolute left-[573px] text-[12px] leading-[16px] text-[#222]" style={{ top: n.ly }}>
            {n.lines.map((l) => <div key={l} className="whitespace-nowrap">{l}</div>)}
          </div>
        </React.Fragment>
      ))}
    </div>
  );
}

const palette = [
  "#b71525","#d30a1f","#c9486a","#e9566b","#ee6b73","#e8619d","#e391b5","#ef8e8f","#f4929c","#fb9d79","#f3ad96","#f5bfb9","#e9d5e6","#fcd3e5","#fce3e9",
  "#13275c","#1e3c7a","#3f2e80","#0e4b93","#0f5ba6","#4063ad","#5382c2","#0878cc","#0a8ed5","#28a8e0","#00b6f1","#25c0f0","#8abde8","#9fd6ee","#cfe9f2",
  "#00463a","#00583f","#00645c","#566f32","#007a44","#1d9140","#00a88f","#54bfc3","#16c8a6","#45bb7c","#00b05a","#7fb612","#a6d05f","#bbd442","#cfe6c8",
  "#e5501c","#ef6a0a","#f58307","#f6a24a","#f6ab00","#ffb000","#ffb733","#ffcd33","#ffd800","#fff000","#fbf27a","#ffd36e","#efcc98","#ffdca0","#fdebd3",
  "#7a2e72","#853a85","#6a3f9a","#775aa5","#9665a0","#9d5c92","#c97fb2","#ab98d2","#c7abd0","#ecc4dd",
  "#5b2a17","#7a3c2a","#934f28","#a85828","#bf7a42","#b08a6b","#dfb88a","#d2cdc0","#ccd7cc",
  "#000000","#3c3c3c","#555555","#666666","#888888","#9c9c9c","#aeaeae","#cccccc","#dcdcdc","#eeeeee","#ffffff",
];

function Center() {
  return (
    <div className="w-[1137px] border-r border-[#cfcfcf] flex flex-col shrink-0">
      <div className="h-[36px] flex shrink-0">
        <div className="w-[240px] bg-[#c2c2c2] flex items-center pl-[19px]">
          <div className="relative w-[20px] h-[20px] bg-[#0a84ff] rounded-[3px] flex items-center justify-center">
            <Sv s={14} c="#fff" w={3}><path d="M3 4H12A8 8 0 0 1 12 20H3M5 12H14" /></Sv>
            <div className="absolute -right-[2px] -bottom-[2px] w-[7px] h-[7px] rounded-full bg-[#f02020]" />
          </div>
          <span className="ml-[11px] text-[18px] text-[#0a78ec]">麦肯锡矩阵</span>
          <div className="ml-[71px]"><XIcon /></div>
        </div>
      </div>
      <div className="h-[26px] flex border-y border-[#dcdcdc] box-content -my-px shrink-0">
        <div className="w-[26px] bg-[#efefef] shrink-0" />
        <HRuler />
      </div>
      <div className="h-[669px] flex shrink-0 overflow-hidden">
        <VRuler />
        <div className="w-[1098px] bg-[#e4e4e4] flex flex-col shrink-0 overflow-hidden">
          <PageCanvas />
        </div>
        <div className="w-[12px] bg-[#ececec] pl-px">
          <div className="w-[10px] h-[437px] mt-[95px] bg-[#bdbdbd] rounded-[4px]" />
        </div>
      </div>
      <div className="h-[13px] flex items-center border-y border-[#dcdcdc] shrink-0 bg-[#f5f5f5]">
        <div className="ml-[229px] w-[647px] h-[9px] rounded-[4px] bg-[#bdbdbd]" />
      </div>
      <div className="flex-1 flex items-center">
        <div className="w-[47px] flex justify-center">
          <svg width="18" height="24" viewBox="0 0 18 24" className="shrink-0"><path d="M9 1L15 14L9 22L3 14Z" fill="none" stroke="#3e3e3e" strokeWidth="2" /><path d="M3 14H15L9 22Z" fill="#3e3e3e" /><circle cx="16" cy="21" r="1.4" fill="#888" /></svg>
        </div>
        <div className="flex h-[21px]">
          {palette.map((c, i) => <div key={i} className="w-[12.1px] h-full" style={{ background: c }} />)}
        </div>
      </div>
    </div>
  );
}

const d = "#484848";
const sideIcons = [
  <path key="a" d="M3 3H10V10H3ZM14 3H15M19 3H21V6M14 7V10H21M3 14H10V21H3ZM14 14H21V21H14Z" strokeWidth="3" />,
  <g key="b"><rect x="1.5" y="4" width="21" height="16" strokeWidth="2.8" /><path d="M4 19L10 12L14 15L17 12L21 18V19Z" fill={d} stroke="none" /><circle cx="7" cy="8.5" r="1" fill={d} stroke="none" /></g>,
  <path key="c" d="M12 3L23 9L12 15L1 9ZM1 14L12 20L23 14" strokeWidth="2.6" />,
  <path key="d" d="M15 2H3V22H21V8ZM7 10H8M11 10H17M7 14H8M11 14H17M7 18H8M11 18H17" strokeWidth="2.6" />,
  <g key="e"><path d="M2 2V21H23" strokeWidth="2.4" /><path d="M7 16L12 9L19 15" strokeWidth="2" /><circle cx="7" cy="16" r="2" fill={d} /><circle cx="12" cy="9" r="2" fill={d} /><circle cx="19" cy="15" r="2" fill={d} /></g>,
  <path key="f" d="M4 2H20Q22 2 22 4V22H4Q2 22 2 20V4Q2 2 4 2ZM2 8H22M2 13H22M2 18H22M8.5 8V22M15.5 8V22" strokeWidth="2.4" />,
  <path key="g" d="M2 4H10V9H14V4H22V21H2ZM2 12H8V17H2M14 9H18V15H14" strokeWidth="2.6" />,
  <path key="h" d="M1 6V3H23V6M5 11H15V19M10 20H22" strokeWidth="2.8" strokeLinecap="butt" />,
  <g key="i"><path d="M8 5.5H9Q12 5.5 12 9V15Q12 18.5 15 18.5H16M8 18.5H9Q12 18.5 12 15V9Q12 5.5 15 5.5H16" strokeWidth="1.8" /><rect x="1" y="3.5" width="7" height="4" rx="2" fill={d} stroke="none" /><rect x="1" y="16.5" width="7" height="4" rx="2" fill={d} stroke="none" /><rect x="16" y="3.5" width="7" height="4" rx="2" fill={d} stroke="none" /><rect x="16" y="16.5" width="7" height="4" rx="2" fill={d} stroke="none" /></g>,
];

function RightBar() {
  return (
    <div className="w-[51px] border-r border-[#cfcfcf] flex flex-col items-stretch shrink-0">
      <div className="h-[47px] flex items-center justify-center"><Chevs dir="right" s={30} /></div>
      <div className="h-[51px] bg-[#0a84ff] flex items-center justify-center">
        <svg width="30" height="30" viewBox="0 0 24 24"><path d="M8 1L11 5" stroke="#fff" strokeWidth="1.8" /><path d="M11 4L20 12L11 21L2 12Z" fill="none" stroke="#fff" strokeWidth="2" /><path d="M2.5 12H19.5L11 20.5Z" fill="#fff" /><circle cx="21" cy="18" r="1.6" fill="#fff" /></svg>
      </div>
      <div className="mt-[6px] flex flex-col">
        {sideIcons.map((ic, i) => (
          <div key={i} className={`h-[66px] flex items-center justify-center ${i === 0 || i === 5 ? "" : "pt-[3px]"}`}>
            <Sv s={28} c={d} w={2.6}>{ic}</Sv>
          </div>
        ))}
      </div>
    </div>
  );
}

const fills = ["无填充", "单色填充", "渐变填充", "单色渐变填充", "图案填充", "图片或纹理填充"];

function RightPanel() {
  return (
    <div className="flex-1 flex flex-col">
      <div className="h-[47px] flex shrink-0">
        <div className="w-[141px] flex items-center justify-center text-[18px] font-bold text-[#111]">填充</div>
        <div className="w-[141px] bg-[#dcdcdc] rounded-bl-[6px] flex items-center justify-center text-[18px] text-[#222]">线条</div>
        <div className="flex-1 bg-[#dcdcdc] flex items-center justify-center text-[18px] text-[#222]">阴影</div>
      </div>
      <div className="pt-[10px] pl-[31px]">
        {fills.map((t, i) => (
          <div key={t} className="h-[51px] flex items-center">
            <div className="w-[16px] h-[16px] rounded-full bg-white border border-[#e6e6e6] flex items-center justify-center">
              {i === 0 && <div className="w-[8px] h-[8px] rounded-full bg-[#bbbbbb]" />}
            </div>
            <span className="ml-[6px] text-[18px] text-[#888]">{t}</span>
          </div>
        ))}
      </div>
    </div>
  );
}

function StatusBar() {
  return (
    <div className="h-[49px] border-t border-[#d8d8d8] flex items-center bg-[#f5f5f5] shrink-0">
      <Sv s={34} h={24} c="#555" w={2} vb="0 0 34 24" className="ml-[26px]"><path d="M2 2V22M32 2V22" stroke="#888" /><rect x="8" y="2.5" width="18" height="19" strokeWidth="3" stroke="#444" /></Sv>
      <span className="ml-[35px] w-[144px] text-[19.5px] text-[#222] font-['Noto_Sans',sans-serif]">Page-1</span>
      <Caret cls="border-t-[#777]" />
      <div className="ml-[6px] w-px h-[36px] bg-[#d8d8d8]" />
      <span className="ml-[28px] w-[61px] text-[18px] font-bold text-[#111] font-['Noto_Sans',sans-serif]">Page-1</span>
      <Sv s={16} c="#444" w={3.2} className="ml-[40px]"><path d="M12 2V22M2 12H22" /></Sv>
      <div className="ml-auto mr-[43px] flex items-center">
        <Sv s={27} c="#444" w={2.2}><circle cx="12" cy="12" r="10.5" /><path d="M9 6.5L17 12L9 17.5Z" fill="#888" stroke="#888" strokeWidth="1" /></Sv>
        <div className="ml-[16px] w-[14px] h-[3px] bg-[#444]" />
        <div className="ml-[11px] relative w-[123px] h-[7px] rounded-full bg-[#e0e0e0]">
          <div className="absolute left-0 top-0 h-full w-[20px] rounded-full bg-[#bdbdbd]" />
          <div className="absolute left-[12px] -top-[5px] w-[17px] h-[17px] rounded-full bg-white border-[3px] border-[#c4c4c4]" />
        </div>
        <Sv s={16} c="#444" w={3} className="ml-[10px]"><path d="M12 2V22M2 12H22" /></Sv>
        <span className="ml-[21px] w-[40px] text-[20px] text-[#222] font-['Noto_Sans',sans-serif]">49%</span>
        <Caret cls="border-t-[#888]" className="ml-[10px]" />
        <Sv s={24} c="#444" w={2.6} className="ml-[26px]"><path d="M2 8V2H8M16 2H22V8M22 16V22H16M8 22H2V16" strokeLinecap="butt" strokeLinejoin="miter" /></Sv>
        <Sv s={24} c="#444" w={2.6} className="ml-[12px]"><rect x="2" y="2" width="20" height="20" /><path d="M6 12H18M9 9L6 12L9 15M15 9L18 12L15 15" strokeWidth="1.8" /></Sv>
      </div>
    </div>
  );
}

export default function App() {
  return (
    <div className="w-[1920px] h-[1018px] overflow-hidden flex flex-col bg-[#f5f5f5] font-['Noto_Sans_CJK_SC','Microsoft_YaHei',sans-serif]">
      <header className="h-[82px] bg-[#0a78ec] shrink-0">
        <div className="h-[41px] flex items-center">
          <QuickBar />
          <div className="text-[18px] text-white">亿图图示</div>
          <WindowBtns />
        </div>
        <TabRow />
      </header>
      <Ribbon />
      <main className="flex h-[768px] shrink-0">
        <LeftPanel />
        <Center />
        <RightBar />
        <RightPanel />
      </main>
      <StatusBar />
    </div>
  );
}
